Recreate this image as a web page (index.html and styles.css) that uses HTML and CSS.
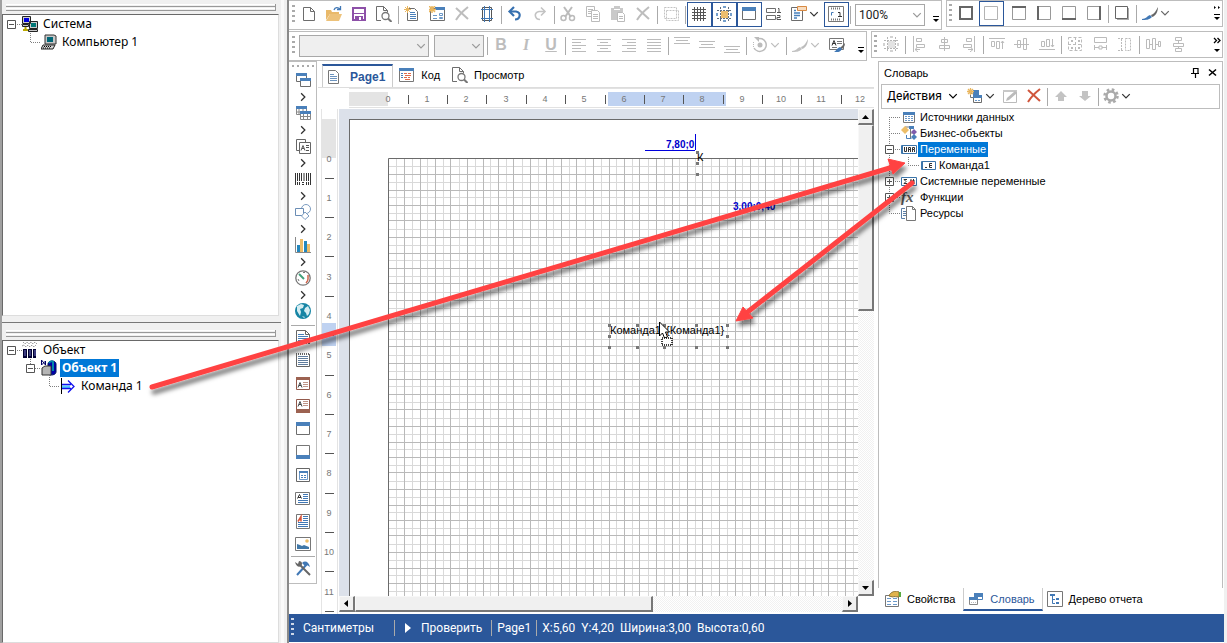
FILE: index.html
```
<!DOCTYPE html>
<html lang="ru">
<head>
<meta charset="utf-8">
<title>Редактор отчета</title>
<link rel="stylesheet" href="styles.css">
</head>
<body>
<svg class="sprite" aria-hidden="true">
  <symbol id="chev" viewBox="0 0 8 8"><path d="M1 2.500l3 3 3-3" fill="none" stroke="currentColor"/></symbol>
  <symbol id="more" viewBox="0 0 8 16"><path d="M1 9.500h6" stroke="#000" fill="none"/><path d="M1 12h6l-3 3z" fill="#000"/></symbol>
  <symbol id="more-dots" viewBox="0 0 8 16"><path d="M1 0v3l2-1.500zM5 0v3l2-1.500z" fill="#000"/><path d="M1 8.500h6" stroke="#000"/><path d="M1 11h6l-3 3z" fill="#000"/></symbol>
  <symbol id="more-arrows" viewBox="0 0 8 16"><path d="M1 1l2.500 2.500L1 6M4.500 1L7 3.500 4.500 6" fill="none" stroke="#000" stroke-width="1.300"/><path d="M1 12h6l-3 3z" fill="#000"/></symbol>
  <symbol id="new" viewBox="0 0 16 16"><path d="M2.500 1.500h7l4 4v9h-11zM9.500 1.500v4h4" fill="#fff" stroke="#6d6d6d"/></symbol>
  <symbol id="open" viewBox="0 0 16 16"><path d="M0 14V4h5l1 2h7v2H4z" fill="#e9b96a"/><path d="M4 8h12l-3 7H0z" fill="#edc27a"/><path d="M8 4c1-3 4-3 6-1M14.500 0v3.500H11" fill="none" stroke="#4178b5" stroke-width="1.300"/></symbol>
  <symbol id="save" viewBox="0 0 16 16"><path d="M2 2h12v12H2z" fill="#fff" stroke="#8d50a8" stroke-width="2"/><path d="M3 7.500h10" stroke="#8d50a8"/><path d="M4 10h8v5H4z" fill="#8d50a8"/><path d="M8 11h2v3H8z" fill="#fff"/></symbol>
  <symbol id="preview" viewBox="0 0 16 16"><path d="M5 14.500H.5v-14h7l4 4v2M7.500.500v4h4" fill="none" stroke="#6d6d6d"/><circle cx="9.500" cy="10" r="3.500" fill="#fff" stroke="#777" stroke-width="1.300"/><path d="M12 12.500l3.500 3.500" stroke="#777" stroke-width="2"/></symbol>
  <symbol id="newpage" viewBox="0 0 16 16"><path d="M3.500 2.500h7l3 3v9h-10z" fill="#fff" stroke="#6d6d6d"/><path d="M6 6.500h5M6 8.500h6M6 10.500h6M6 12.500h6" stroke="#4a80ba"/><path d="M3.500 0v7M0 3.500h7M1 1l5 5M6 1L1 6" stroke="#e9b65f"/></symbol>
  <symbol id="newform" viewBox="0 0 16 16"><path d="M1.500 2.500h14v12h-14z" fill="#fff" stroke="#6d6d6d"/><path d="M6 1h10v3H6z" fill="#4a80ba"/><path d="M4 9.500h4M4 12.500h4M10.500 7.500h3v2h-3zM10.500 11.500h3v1h-3z" stroke="#6b98c9" fill="none"/><path d="M3 0v7M0 3.500h7M0 0l6 6M6 0L0 6" stroke="#e9b65f" stroke-width="1.500"/></symbol>
  <symbol id="x" viewBox="0 0 16 16"><path d="M2 2l12 11M14 1C9 5 5 9 2 14" fill="none" stroke="currentColor" stroke-width="2"/></symbol>
  <symbol id="pagesetup" viewBox="0 0 16 16"><path d="M3.500 1.500h9v13h-9z" fill="none" stroke="#555"/><path d="M5.500 0v16M10.500 0v16M2 3.500h12M2 12.500h12" fill="none" stroke="#4178b5"/></symbol>
  <symbol id="undo" viewBox="0 0 16 16"><path d="M3 5.500h6c6 1 4 8-1 8" fill="none" stroke="#3670b0" stroke-width="2.200"/><path d="M7 1L2.500 5.500 7 10" fill="none" stroke="#3670b0" stroke-width="2.200"/></symbol>
  <symbol id="redo" viewBox="0 0 16 16"><path d="M13 5.500H7c-6 1-4 8 1 8" fill="none" stroke="#c3c3c3" stroke-width="1.600"/><path d="M9 1.500l4 4-4 4" fill="none" stroke="#c3c3c3" stroke-width="1.600"/></symbol>
  <symbol id="cut" viewBox="0 0 16 16"><path d="M4 1l7 10M12 1L5 11" stroke="#bbb" stroke-width="2"/><circle cx="3.500" cy="12" r="2.500" fill="none" stroke="#bbb" stroke-width="1.500"/><circle cx="12" cy="12" r="2.500" fill="none" stroke="#bbb" stroke-width="1.500"/></symbol>
  <symbol id="copy" viewBox="0 0 16 16"><path d="M1.500.500h8v10h-8z" fill="#fff" stroke="#bbb"/><path d="M6.500 4.500h6l2 2v9h-8z" fill="#fff" stroke="#bbb"/><path d="M3 3.500h5M3 5.500h3M3 7.500h3M8 8.500h5M8 10.500h5M8 12.500h5" stroke="#bbb"/></symbol>
  <symbol id="paste" viewBox="0 0 16 16"><path d="M1 2h3V0h6v2h3v5H7v7H1z" fill="#c9c9c9"/><path d="M4 3.500h6" stroke="#fff"/><path d="M7.500 6.500h5l2 2v7h-7z" fill="#fff" stroke="#bbb"/><path d="M9 10.500h4M9 12.500h4" stroke="#bbb"/></symbol>
  <symbol id="selectall" viewBox="0 0 16 16"><path d="M1.500 1.500h12v11h-12zM3.500 4.500h12v10h-12z" fill="none" stroke="#c3c3c3" stroke-dasharray="2 1"/></symbol>
  <symbol id="gridic" viewBox="0 0 16 16"><path d="M3.500 1v14M6.500 1v14M9.500 1v14M12.500 1v14M1 3.500h14M1 6.500h14M1 9.500h14M1 12.500h14" stroke="#555"/></symbol>
  <symbol id="snap" viewBox="0 0 16 16"><path d="M5 5h7v7H5z" fill="#edbe6e"/><path d="M1 4.500h14M1 12.500h14M4.500 1v14M12.500 1v14" stroke="#5f6d7d" stroke-dasharray="2 1"/><path d="M7 1h3M7 15h3M1 7v3M15 7v3" stroke="#4a80ba" stroke-width="1.500"/></symbol>
  <symbol id="snapg" viewBox="0 0 16 16"><path d="M5 5h7v7H5z" fill="#e3e3e3"/><path d="M1 4.500h14M1 12.500h14M4.500 1v14M12.500 1v14" stroke="#b5b5b5" stroke-dasharray="2 1"/><path d="M7 1h3M7 15h3M1 7v3M15 7v3" stroke="#c3c3c3" stroke-width="1.500"/></symbol>
  <symbol id="win" viewBox="0 0 16 16"><path d="M1.500 1.500h13v12h-13z" fill="#fff" stroke="#6d6d6d"/><path d="M1 1h14v4H1z" fill="#4a80ba"/></symbol>
  <symbol id="order" viewBox="0 0 16 16"><path d="M.5 2.500h9v4h-9zM.5 9.500h9v4h-9z" fill="#fff" stroke="#6d6d6d"/><path d="M12 2.500h1v4M11 6.500h4M11 9.500h3v2h-3v2h4" fill="none" stroke="#555"/></symbol>
  <symbol id="script" viewBox="0 0 16 16"><path d="M.5 1.500h11v13H.5z" fill="#fff" stroke="#6d6d6d"/><path d="M3 4.500h2M3 7h6M3 9.500h6M3 12h3" stroke="#4a80ba" stroke-width="1.300"/><path d="M6.500.500h9v4h-9z" fill="#f8ddc0" stroke="#d88a43"/></symbol>
  <symbol id="rulerd" viewBox="0 0 16 16"><path d="M.5.500h15v15H.5z" fill="#fff" stroke="#777"/><path d="M3 2.500h10M3 13.500h10" stroke="#777" stroke-width="2" stroke-dasharray="1 1"/><path d="M3.500 9.500v-3h2" fill="none" stroke="#4178b5"/><path d="M10 6.500h2v4M10 10.500h4" fill="none" stroke="#333"/></symbol>
  <symbol id="al" viewBox="0 0 16 16"><path d="M1 2.500h14M1 5.500h9M1 8.500h14M1 11.500h9M1 14.500h14" stroke="#bbb"/></symbol>
  <symbol id="ac" viewBox="0 0 16 16"><path d="M1 2.500h14M4 5.500h8M1 8.500h14M4 11.500h8M1 14.500h14" stroke="#bbb"/></symbol>
  <symbol id="ar" viewBox="0 0 16 16"><path d="M1 2.500h14M6 5.500h9M1 8.500h14M6 11.500h9M1 14.500h14" stroke="#bbb"/></symbol>
  <symbol id="aj" viewBox="0 0 16 16"><path d="M1 2.500h14M1 5.500h14M1 8.500h14M1 11.500h14M1 14.500h14" stroke="#bbb"/></symbol>
  <symbol id="vt" viewBox="0 0 16 16"><path d="M0 .5h16M2 3.500h12M0 6.500h16" stroke="#bbb"/></symbol>
  <symbol id="vm" viewBox="0 0 16 16"><path d="M0 4.500h16M2 7.500h12M0 10.500h16" stroke="#bbb"/></symbol>
  <symbol id="vb" viewBox="0 0 16 16"><path d="M0 9.500h16M2 12.500h12M0 15.500h16" stroke="#bbb"/></symbol>
  <symbol id="rot" viewBox="0 0 16 16"><path d="M5 2a6.500 6.500 0 1 1-3 9" fill="none" stroke="#bbb" stroke-width="1.500"/><path d="M2 0h5v5z" fill="#bbb"/><circle cx="8" cy="8" r="2.500" fill="#bbb"/><path d="M1.500 5v5" stroke="#bbb" stroke-dasharray="1 1"/></symbol>
  <symbol id="brush" viewBox="0 0 16 16"><path d="M16 2c0 4-2 9-6 10l-1-2c3-1 5-4 7-8z" fill="currentColor"/><path d="M8 10l2 2c-3 3-6 3-10 3v-1c4 0 5-3 8-4z" fill="var(--tip)"/></symbol>
  <symbol id="style" viewBox="0 0 16 16"><path d="M.5 1.500h14v11H.5z" fill="#fff" stroke="#777"/><path d="M3 8.500L5 3.500l2 5M3.500 6.500h3" fill="none" stroke="#333"/><path d="M8 4.500h5M8 6.500h5M3 10.500h5" stroke="#777"/><path d="M16 6c0 3-2 6-4 6l-1-1z" fill="#666"/><path d="M11 10l2 2c-2 4-5 3-8 3 2-1 3-4 6-5z" fill="#4178b5"/></symbol>
  <symbol id="ball" viewBox="0 0 16 16"><path d="M2 2h12v12H2z" fill="#fff" stroke="#666" stroke-width="2"/></symbol>
  <symbol id="bnone" viewBox="0 0 16 16"><path d="M1.500 1.500h13v13h-13z" fill="#fff" stroke="#b3b3b3"/></symbol>
  <symbol id="btop" viewBox="0 0 16 16"><path d="M1.500 1.500h13v13h-13z" fill="#fff" stroke="#999"/><path d="M1 2h14" stroke="#666" stroke-width="2"/></symbol>
  <symbol id="bleft" viewBox="0 0 16 16"><path d="M1.500 1.500h13v13h-13z" fill="#fff" stroke="#999"/><path d="M2 1v14" stroke="#666" stroke-width="2"/></symbol>
  <symbol id="bbot" viewBox="0 0 16 16"><path d="M1.500 1.500h13v13h-13z" fill="#fff" stroke="#999"/><path d="M1 14h14" stroke="#666" stroke-width="2"/></symbol>
  <symbol id="bright" viewBox="0 0 16 16"><path d="M1.500 1.500h13v13h-13z" fill="#fff" stroke="#999"/><path d="M14 1v14" stroke="#666" stroke-width="2"/></symbol>
  <symbol id="bshadow" viewBox="0 0 16 16"><path d="M3 3h12v12H3z" fill="#aaa"/><path d="M1.500 1.500h12v12h-12z" fill="#fff" stroke="#666"/></symbol>
  <symbol id="oleft" viewBox="0 0 16 16"><path d="M2.500 0v16M5.500 2.500h5v3h-5zM5.500 8.500h8v3h-8zM4 13.500h5M7 11l-3 2.500L7 16" fill="none" stroke="#bbb"/></symbol>
  <symbol id="ocen" viewBox="0 0 16 16"><path d="M8.500 1v14M5.500 3.500h6v3h-6zM3.500 9.500h10v3h-10z" fill="#fff" stroke="#bbb"/></symbol>
  <symbol id="oright" viewBox="0 0 16 16"><path d="M13.500 0v16M5.500 2.500h5v3h-5zM2.500 8.500h8v3h-8zM7 13.500h5M9 11l3 2.500L9 16" fill="none" stroke="#bbb"/></symbol>
  <symbol id="otop" viewBox="0 0 16 16"><path d="M0 2.500h16M2.500 5.500h3v5h-3zM7.500 5.500h3v7h-3zM13.500 5v8M12 7l1.500-2L15 7" fill="none" stroke="#bbb"/></symbol>
  <symbol id="omid" viewBox="0 0 16 16"><path d="M0 8.500h15M3.500 4.500h3v7h-3zM9.500 2.500h3v11h-3z" fill="#fff" stroke="#bbb"/></symbol>
  <symbol id="obot" viewBox="0 0 16 16"><path d="M0 13.500h16M2.500 5.500h3v5h-3zM7.500 3.500h3v7h-3zM13.500 3v8M12 9l1.500 2L15 9" fill="none" stroke="#bbb"/></symbol>
  <symbol id="osize" viewBox="0 0 16 16"><path d="M1.500 1.500h13v13h-13zM1 8.500h14M8.500 1v14" fill="none" stroke="#bbb" stroke-dasharray="3 2"/><path d="M4 4h2v2H4zM11 4h2v2h-2zM4 11h2v2H4zM11 11h2v2h-2z" fill="#bbb"/></symbol>
  <symbol id="owid" viewBox="0 0 16 16"><path d="M2.500 1.500h12v5h-12zM2.500 9v5M14.500 9v5M3 11.500h11" fill="none" stroke="#bbb"/><path d="M7 10h3v3H7z" fill="#fff" stroke="#bbb"/></symbol>
  <symbol id="ohei" viewBox="0 0 16 16"><path d="M8.500 2.500h5v12h-5zM1 2.500h6M1 14.500h6M4.500 3v11" fill="none" stroke="#bbb" stroke-dasharray="2 1"/></symbol>
  <symbol id="ohsp" viewBox="0 0 16 16"><path d="M1.500 3.500h3v9h-3zM7.500 2.500h3v11h-3zM13.500 5.500h2v5h-2zM5 8.500h2M11 8.500h2" fill="none" stroke="#bbb"/></symbol>
  <symbol id="ovsp" viewBox="0 0 16 16"><path d="M5.500 1.500h6v3h-6zM3.500 7.500h10v3h-10zM5.500 12.500h6v3h-6zM8.500 4v3M8.500 10v2" fill="none" stroke="#bbb"/></symbol>
  <symbol id="page" viewBox="0 0 16 16"><path d="M1.500 1.500h7l3 3v10h-10z" fill="#fff" stroke="#777"/><path d="M3 5.500h4M3 7.500h7M3 9.500h7M3 11.500h7" stroke="#6d94bf"/></symbol>
  <symbol id="code" viewBox="0 0 16 16"><path d="M.5 1.500h14v13H.5z" fill="#fff" stroke="#777"/><path d="M0 1h15v3H0z" fill="#4a80ba"/><path d="M2 6.500h2M2 8.500h2M2 10.500h2" stroke="#4a80ba"/><path d="M5 6.500h3M9 6.500h3M6 8.500h6M5 10.500h3M9 10.500h2M6 12.500h5" stroke="#e06a4a"/></symbol>
  <symbol id="bands" viewBox="0 0 16 16"><path d="M1.500 1.500h10v8h-10z" fill="#fff" stroke="#6d6d6d"/><path d="M1 1h11v3H1z" fill="#4a80ba"/><path d="M5.500 6.500h10v8h-10z" fill="#fff" stroke="#6d6d6d"/><path d="M5 6h11v3H5z" fill="#4a80ba"/></symbol>
  <symbol id="cross" viewBox="0 0 16 16"><path d="M1.500 1.500h10v8h-10zM4 4v6M8 4v6M1 7h10" fill="#fff" stroke="#888"/><path d="M1 1h11v3H1z" fill="#4a80ba"/><path d="M5.500 6.500h10v8h-10zM8.500 7v7M12.500 7v7M5 11.500h10" fill="#fff" stroke="#888"/><path d="M5 6h11v3H5z" fill="#4a80ba"/></symbol>
  <symbol id="comps" viewBox="0 0 16 16"><path d="M1.500 1.500h9v11h-9z" fill="#fff" stroke="#666"/><path d="M4.500 4.500h11v11h-11z" fill="#fff" stroke="#666"/><path d="M6 12.500l2-5 2 5M7 10.500h2M11 7.500h3M11 9.500h3M11 12.500h3" fill="none" stroke="#555"/></symbol>
  <symbol id="bar" viewBox="0 0 16 16"><path d="M.5 2v12M2.500 2v8M4.500 2v8M6.500 2v8M9 2v8M11.500 2v8M13.500 2v8M15.500 2v12" stroke="#333"/><path d="M2.500 11v3M4.500 11v3M7 11.500h2M7 13.500h2M11.500 11v3M13.500 11v3" fill="none" stroke="#333"/></symbol>
  <symbol id="shapes" viewBox="0 0 16 16"><circle cx="11" cy="5" r="4.500" fill="#fff" stroke="#7c9cc0"/><path d="M.5 4.500h8v7h-8z" fill="#fff" stroke="#6a8db5"/><path d="M10 8l4 4-4 3.500L6.500 12z" fill="#fff" stroke="#7c9cc0"/></symbol>
  <symbol id="chart" viewBox="0 0 16 16"><path d="M.5 0v15.500H16" fill="none" stroke="#888"/><path d="M2 8h3v7H2zM9 4h3v11H9z" fill="#2387bd"/><path d="M5 2h3v13H5zM12 7h3v8h-3z" fill="#ecbd68"/></symbol>
  <symbol id="gauge" viewBox="0 0 16 16"><circle cx="8" cy="8" r="7.200" fill="#fff" stroke="#777" stroke-width="1.300"/><path d="M13 5v4c0 2-1 3-2 4" fill="none" stroke="#d0644b" stroke-width="1.500"/><path d="M4 4l5 5" stroke="#41a07b" stroke-width="2"/><path d="M3 9l1 2M8 2.500h2" stroke="#777"/></symbol>
  <symbol id="globe" viewBox="0 0 16 16"><circle cx="8" cy="8" r="8" fill="#1685a5"/><path d="M2 3l4-2 3 1-1 3-3 1 1 3-1 4-3-5zM10 5l3-2 2 4-1 4-2 2-1-3-2-2zM7 13l3 1-1 1z" fill="#d5edf2"/></symbol>
  <symbol id="sub" viewBox="0 0 16 16"><path d="M1.500 15V1.500h9l4 4V15" fill="#fff" stroke="#666"/><path d="M10.500 1.500v4h4" fill="none" stroke="#666"/><path d="M3 5.500h6M3 7.500h10M3 9.500h10M3 11.500h10" stroke="#4a80ba"/><path d="M1 14.500h14" stroke="#555" stroke-dasharray="1 1"/></symbol>
  <symbol id="memo" viewBox="0 0 16 16"><path d="M1.500 2v12.500h13V2" fill="#fff" stroke="#666"/><path d="M1 2h14" stroke="#666" stroke-width="2" stroke-dasharray="1 1"/><path d="M3 4.500h10M3 6.500h10M3 8.500h10M3 10.500h10M3 12.500h10" stroke="#607d9d"/></symbol>
  <symbol id="headb" viewBox="0 0 16 16"><path d="M1.500 2.500h13v12h-13z" fill="#fff" stroke="#93594b"/><path d="M1 2h14v3H1z" fill="#9c6251"/><path d="M3 12.500L5 7.500l2 5M4 10.500h2" fill="none" stroke="#444"/><path d="M8 7.500h5M8 9.500h5M8 11.500h5" stroke="#c09588"/></symbol>
  <symbol id="footb" viewBox="0 0 16 16"><path d="M1.500 1.500h13v12h-13z" fill="#fff" stroke="#93594b"/><path d="M1 11h14v4H1z" fill="#9c6251"/><path d="M3 8.500L5 3.500l2 5M4 6.500h2" fill="none" stroke="#444"/><path d="M8 3.500h5M8 5.500h5M8 7.500h5" stroke="#c09588"/></symbol>
  <symbol id="foot" viewBox="0 0 16 16"><path d="M1.500 1.500h13v13h-13z" fill="#fff" stroke="#777"/><path d="M1 11h14v4H1z" fill="#4a80ba"/></symbol>
  <symbol id="panel" viewBox="0 0 16 16"><path d="M1.500 1.500h13v13h-13z" fill="#fff" stroke="#666"/><path d="M4.500 5.500h8v7h-8z" fill="#fff" stroke="#6b98c9"/><path d="M4 4h9v2H4z" fill="#4a80ba"/><path d="M6 8.500h2M9 8.500h2M6 10.500h2M9 10.500h2" stroke="#4a80ba"/></symbol>
  <symbol id="text" viewBox="0 0 16 16"><path d="M.5 2.500h14v12H.5z" fill="#fff" stroke="#777"/><path d="M2.500 8.500l2-4 2 4M3 7.500h3" fill="none" stroke="#333"/><path d="M8 4.500h5M8 6.500h5M8 8.500h5M3 10.500h10M3 12.500h10" stroke="#4178b5"/></symbol>
  <symbol id="rich" viewBox="0 0 16 16"><path d="M1.500 1.500h13v14h-13z" fill="#fff" stroke="#777"/><path d="M3 8.500l3-5v5M4 6.500h2" fill="none" stroke="#d6543a" stroke-width="1.500"/><path d="M8 3.500h5M8 5.500h5M8 7.500h5M3 9.500h10M3 11.500h10M3 13.500h10" stroke="#4178b5"/></symbol>
  <symbol id="image" viewBox="0 0 16 16"><path d="M.5 1.500h15v13H.5z" fill="#fff" stroke="#777"/><path d="M2 8l3 1 2 1 2-1 5 2v2H2z" fill="#4178a8"/><circle cx="12" cy="5" r="1.800" fill="#ecbd68"/></symbol>
  <symbol id="tools" viewBox="0 0 16 16"><path d="M2 15L12 4" stroke="#4178b5" stroke-width="2"/><path d="M7 3c3-3 7-1 8 4l-3-2-2 1z" fill="#4178b5"/><path d="M4 4l11 11" stroke="#666" stroke-width="2"/><path d="M0 2l3 2 1-3c3 0 4 3 2 5S1 6 0 2z" fill="#666"/></symbol>
  <symbol id="newdict" viewBox="0 0 16 16"><path d="M3.500 5.500h6v4h-6z" fill="#fff" stroke="#777"/><path d="M6 2h6v5H6z" fill="#4a80ba"/><path d="M6.500 8.500h8v6h-8z" fill="#fff" stroke="#6d6d6d"/><path d="M6 7h9v3H6z" fill="#4a80ba"/><path d="M8 12.500h2M11 12.500h2" stroke="#6b98c9"/><path d="M3.500 0v7M0 3.500h7M1 1l5 5M6 1L1 6" stroke="#e9b65f" stroke-width="1.300"/></symbol>
  <symbol id="edit" viewBox="0 0 16 16"><path d="M1.500 2.500h13v12h-13z" fill="none" stroke="#bbb"/><path d="M1 2h14v2H1z" fill="#c8c8c8"/><path d="M4 13l1-3 8-7 2 2-8 7z" fill="#bbb"/></symbol>
  <symbol id="up" viewBox="0 0 16 16"><path d="M8 3l6 6h-3v4H5V9H2z" fill="#c3c3c3"/></symbol>
  <symbol id="down" viewBox="0 0 16 16"><path d="M8 13L2 8h3V3h6v5h3z" fill="#c3c3c3"/></symbol>
  <symbol id="gear" viewBox="0 0 16 16"><circle cx="8" cy="8" r="4.500" fill="none" stroke="#aaa" stroke-width="2.500"/><circle cx="8" cy="8" r="6.500" fill="none" stroke="#aaa" stroke-width="2.500" stroke-dasharray="2.600 2.500"/></symbol>
  <symbol id="ds" viewBox="0 0 16 16"><path d="M2.500 3.500h11v10h-11z" fill="#fff" stroke="#777"/><path d="M2 3h12v3H2z" fill="#4a80ba"/><path d="M4 7.500h8M4 9.500h8M4 11.500h8" stroke="#6b98c9" stroke-dasharray="2 1"/></symbol>
  <symbol id="bo" viewBox="0 0 16 16"><path d="M4 2h9M9.500 3v5h4M9.500 8v5" fill="none" stroke="#777"/><path d="M8 1h5v3H8z" fill="#4a80ba"/><path d="M4 1l4 4-4 4-4-4z" fill="#ecbd68"/><path d="M13 4l3 3-3 3-3-3z" fill="#7e5cad"/><path d="M13 9l3 3-3 3-3-3z" fill="#4a80ba"/><path d="M5.500 10v3.500h5" fill="none" stroke="#4a80ba"/></symbol>
  <symbol id="var" viewBox="0 0 16 16"><path d="M.5 4.500h15v8H.5z" fill="#fff" stroke="#3b74a9"/><path d="M1.500 4v8" stroke="#3b74a9"/><path d="M3.500 6v4.500h2V6M7.500 11V6.500h2V11M7 8.500h2M11.500 11V6.500h2v2h-2M13.500 9v2" fill="none" stroke="#333"/></symbol>
  <symbol id="vare" viewBox="0 0 16 16"><path d="M1.500 4.500h14v8h-14z" fill="#fff" stroke="#3b74a9"/><path d="M2.500 4v8" stroke="#3b74a9"/><path d="M5 10.500h2M12 6.500H9.500v4H12M10 8.500h2" fill="none" stroke="#333"/></symbol>
  <symbol id="sys" viewBox="0 0 16 16"><path d="M.5 4.500h15v8H.5z" fill="#fff" stroke="#3b74a9"/><path d="M6 6.500H3l2 2-2 2h3M9 8h5M9 10h5M10 6v5M12.500 6v5" fill="none" stroke="#333"/></symbol>
  <symbol id="res" viewBox="0 0 16 16"><path d="M4 13.500H.5v-10H4M2 6.500h3M2 8.500h3M2 10.500h3" fill="none" stroke="#5c7fa6"/><path d="M5.500 1.500h6l3 3v11h-9zM11.500 1.500v3h3" fill="#fff" stroke="#777"/></symbol>
  <symbol id="props" viewBox="0 0 16 16"><path d="M.5 4.500h13v11H.5z" fill="#fff" stroke="#777"/><path d="M2 7.500h4M8 7.500h4M2 10.500h4M8 10.500h4M2 13.500h4M8 13.500h4" stroke="#6b98c9"/><path d="M4 5c1-4 7-6 10-4v5c-3 0-5-1-6 0z" fill="#e0b34d" stroke="#8b7336"/><path d="M14 1h2v5h-2z" fill="#58a941"/></symbol>
  <symbol id="dict" viewBox="0 0 16 16"><path d="M6.500 2.500h8v6h-8z" fill="#fff" stroke="#4a80ba"/><path d="M6 2h9v4H6z" fill="#4a80ba"/><path d="M1.500 6.500h8v7h-8z" fill="#fff" stroke="#888"/><path d="M1 6h9v3H1z" fill="#4a80ba"/><path d="M3 11.500h5" stroke="#bbb" stroke-dasharray="1 1"/></symbol>
  <symbol id="rtree" viewBox="0 0 16 16"><path d="M.5.500h15v15H.5z" fill="#fff" stroke="#777"/><path d="M3 4h5M9 8h3M9 12h3" stroke="#4178b5" stroke-width="2"/><path d="M5.500 5v7.500H8M6 8.500h2" fill="none" stroke="#4178b5"/></symbol>
  <symbol id="pc" viewBox="0 0 16 16"><path d="M4 1h9l2 1v8H4z" fill="#c8c8c8" stroke="#333"/><path d="M6 3h6v5H6z" fill="#067"/><path d="M2 11h12l-2 4H0z" fill="#d5d5d5" stroke="#222"/><path d="M3 12.500h8M2 14h8" stroke="#000" stroke-dasharray="1 1"/></symbol>
  <symbol id="net" viewBox="0 0 16 16"><path d="M.5.500h8v7h-8zM7.500 5.500h8v7h-8z" fill="#ccc" stroke="#222"/><path d="M2 2h5v4H2z" fill="#00d"/><path d="M9 7h5v4H9z" fill="#077"/><path d="M.5 8.500h6v2h-6zM6.500 13.500h9v2h-9z" fill="#c8c8c8" stroke="#222"/><path d="M3.500 11v4M1 14h5" stroke="#bba900" stroke-width="2"/></symbol>
  <symbol id="plant" viewBox="0 0 16 16"><path d="M1 0l2 2 2-2 2 2 2-2 2 2 2-2 2 2M0 4l2-1 2 2 2-2 2 2 2-2 2 2 2-2" fill="none" stroke="#999" stroke-dasharray="2 1"/><path d="M1 7h4v9H1zM6 7h4v9H6zM11 7h3v9h-3z" fill="#003"/><path d="M3 8v6M8 8v6M13 8v6" stroke="#77c"/></symbol>
  <symbol id="obj" viewBox="0 0 16 16"><path d="M.5 0v5l4-4v4z" fill="none" stroke="#006"/><path d="M7 4c0-4 8-4 8 0v8c0 3-6 4-8 2z" fill="#00a" stroke="#001060"/><path d="M8 3c1-2 4-2 4-1v9" fill="none" stroke="#08a" stroke-width="2"/><path d="M1 8l3-2h6v9H1z" fill="#b5b5b5" stroke="#333"/></symbol>
  <symbol id="cmd" viewBox="0 0 16 16"><path d="M2 7.500h8v3H2z" fill="#5cf"/><path d="M2 6.500h9M2 10.500h9M8 2.500l6 6-6 6" fill="none" stroke="#11e" stroke-width="1.300"/><path d="M1.500 0v16" stroke="#000"/></symbol>
</svg>

<div class="app">
  <aside class="side">
    <section class="dock dock-top">
      <div class="dock-grip"></div>
      <ul class="tree">
        <li><svg class="gut" width="19" height="18"><path class="dot" d="M14 9.500h5"/><path class="box" d="M4.500 5.500h8v8h-8zM6 9.500h5"/></svg><svg class="i"><use href="#net"/></svg><span>Система</span></li>
        <li><svg class="gut" width="38" height="18"><path class="dot" d="M27.500 0v9.500h11"/></svg><svg class="i"><use href="#pc"/></svg><span>Компьютер 1</span></li>
      </ul>
    </section>
    <section class="dock dock-bottom">
      <div class="dock-grip"></div>
      <ul class="tree">
        <li><svg class="gut" width="19" height="18"><path class="dot" d="M14 9.500h5"/><path class="box" d="M4.500 5.500h8v8h-8zM6 9.500h5"/></svg><svg class="i"><use href="#plant"/></svg><span>Объект</span></li>
        <li><svg class="gut" width="38" height="18"><path class="dot" d="M27.500 0v5M32 9.500h6"/><path class="box" d="M23.500 5.500h8v8h-8zM25 9.500h5"/></svg><svg class="i"><use href="#obj"/></svg><span class="picked">Объект 1</span></li>
        <li><svg class="gut" width="57" height="18"><path class="dot" d="M46.500 0v9.500h11"/></svg><svg class="i"><use href="#cmd"/></svg><span>Команда 1</span></li>
      </ul>
    </section>
  </aside>

  <main class="designer">
    <div class="bars">
      <div class="bar grow">
        <i class="grip"></i>
        <button aria-label="Новый"><svg class="i"><use href="#new"/></svg></button><button aria-label="Открыть"><svg class="i"><use href="#open"/></svg></button><button aria-label="Сохранить"><svg class="i"><use href="#save"/></svg></button><button aria-label="Просмотр"><svg class="i"><use href="#preview"/></svg></button>
        <i class="sep"></i>
        <button aria-label="Новая страница"><svg class="i"><use href="#newpage"/></svg></button><button aria-label="Новая форма"><svg class="i"><use href="#newform"/></svg></button><button class="off" aria-label="Удалить страницу"><svg class="i"><use href="#x"/></svg></button><button aria-label="Параметры страницы"><svg class="i"><use href="#pagesetup"/></svg></button>
        <i class="sep"></i>
        <button aria-label="Отменить"><svg class="i"><use href="#undo"/></svg></button><button aria-label="Вернуть"><svg class="i"><use href="#redo"/></svg></button>
        <i class="sep"></i>
        <button aria-label="Вырезать"><svg class="i"><use href="#cut"/></svg></button><button aria-label="Копировать"><svg class="i"><use href="#copy"/></svg></button><button aria-label="Вставить"><svg class="i"><use href="#paste"/></svg></button><button class="off" aria-label="Удалить"><svg class="i"><use href="#x"/></svg></button>
        <i class="sep"></i>
        <button aria-label="Выделить все"><svg class="i"><use href="#selectall"/></svg></button>
        <i class="sep"></i>
        <button class="on" aria-label="Сетка"><svg class="i"><use href="#gridic"/></svg></button><button class="on" aria-label="Привязка"><svg class="i"><use href="#snap"/></svg></button><button class="on" aria-label="Заголовки"><svg class="i"><use href="#win"/></svg></button><button aria-label="Порядок"><svg class="i"><use href="#order"/></svg></button><button class="drop" aria-label="Быстрая информация"><svg class="i"><use href="#script"/></svg><svg class="chev"><use href="#chev"/></svg></button><button class="on" aria-label="Линейки"><svg class="i"><use href="#rulerd"/></svg></button>
        <i class="sep"></i>
        <span class="combo zoom"><select aria-label="Масштаб"><option>100%</option></select><svg class="chev"><use href="#chev"/></svg></span>
        <button class="more" aria-label="Еще"><svg><use href="#more"/></svg></button>
      </div>
      <div class="bar short side-a">
        <i class="grip"></i>
        <button aria-label="Все границы"><svg class="i"><use href="#ball"/></svg></button><button class="on" aria-label="Нет границ"><svg class="i"><use href="#bnone"/></svg></button>
        <i class="sep clear"></i>
        <button aria-label="Верхняя"><svg class="i"><use href="#btop"/></svg></button><button aria-label="Левая"><svg class="i"><use href="#bleft"/></svg></button><button aria-label="Нижняя"><svg class="i"><use href="#bbot"/></svg></button><button aria-label="Правая"><svg class="i"><use href="#bright"/></svg></button>
        <i class="sep"></i>
        <button aria-label="Тень"><svg class="i"><use href="#bshadow"/></svg></button>
        <i class="sep"></i>
        <button class="drop ink" aria-label="Цвет границы"><svg class="i"><use href="#brush"/></svg><svg class="chev"><use href="#chev"/></svg></button>
        <button class="more" aria-label="Еще"><svg><use href="#more-dots"/></svg></button>
      </div>
    </div>
    <div class="bars second">
      <div class="bar grow">
        <i class="grip"></i>
        <span class="combo font"><select aria-label="Шрифт" disabled><option></option></select><svg class="chev"><use href="#chev"/></svg></span>
        <span class="combo size"><select aria-label="Размер" disabled><option></option></select><svg class="chev"><use href="#chev"/></svg></span>
        <i class="sep"></i>
        <button class="off"><b>B</b></button><button class="off"><em>I</em></button><button class="off"><u>U</u></button>
        <i class="sep"></i>
        <button aria-label="По левому краю"><svg class="i"><use href="#al"/></svg></button><button aria-label="По центру"><svg class="i"><use href="#ac"/></svg></button><button aria-label="По правому краю"><svg class="i"><use href="#ar"/></svg></button><button aria-label="По ширине"><svg class="i"><use href="#aj"/></svg></button>
        <i class="sep"></i>
        <button aria-label="Сверху"><svg class="i"><use href="#vt"/></svg></button><button aria-label="Посередине"><svg class="i"><use href="#vm"/></svg></button><button aria-label="Снизу"><svg class="i"><use href="#vb"/></svg></button>
        <i class="sep"></i>
        <button class="drop off" aria-label="Поворот"><svg class="i"><use href="#rot"/></svg><svg class="chev"><use href="#chev"/></svg></button>
        <i class="sep"></i>
        <button class="drop off" aria-label="Цвет текста"><svg class="i"><use href="#brush"/></svg><svg class="chev"><use href="#chev"/></svg></button>
        <button class="styles" aria-label="Стили"><svg class="i"><use href="#style"/></svg></button>
        <button class="more" aria-label="Еще"><svg><use href="#more"/></svg></button>
      </div>
      <div class="bar short side-b">
        <i class="grip"></i>
        <button aria-label="По сетке"><svg class="i"><use href="#snapg"/></svg></button>
        <i class="sep"></i>
        <button aria-label="Левые края"><svg class="i"><use href="#oleft"/></svg></button><button aria-label="Центры"><svg class="i"><use href="#ocen"/></svg></button><button aria-label="Правые края"><svg class="i"><use href="#oright"/></svg></button>
        <i class="sep"></i>
        <button aria-label="Верхние края"><svg class="i"><use href="#otop"/></svg></button><button aria-label="Середины"><svg class="i"><use href="#omid"/></svg></button><button aria-label="Нижние края"><svg class="i"><use href="#obot"/></svg></button>
        <i class="sep"></i>
        <button aria-label="Одинаковый размер"><svg class="i"><use href="#osize"/></svg></button><button aria-label="Одинаковая ширина"><svg class="i"><use href="#owid"/></svg></button><button aria-label="Одинаковая высота"><svg class="i"><use href="#ohei"/></svg></button>
        <i class="sep"></i>
        <button aria-label="Интервал по горизонтали"><svg class="i"><use href="#ohsp"/></svg></button><button aria-label="Интервал по вертикали"><svg class="i"><use href="#ovsp"/></svg></button>
        <button class="more" aria-label="Еще"><svg><use href="#more-arrows"/></svg></button>
      </div>
    </div>

    <div class="work">
      <nav class="palette">
        <i class="hgrip"></i>
        <button aria-label="Бэнды"><svg class="i"><use href="#bands"/></svg><svg class="chev"><use href="#chev"/></svg></button>
        <button aria-label="Кросс-бэнды"><svg class="i"><use href="#cross"/></svg><svg class="chev"><use href="#chev"/></svg></button>
        <button aria-label="Компоненты"><svg class="i"><use href="#comps"/></svg><svg class="chev"><use href="#chev"/></svg></button>
        <button aria-label="Штрихкоды"><svg class="i"><use href="#bar"/></svg><svg class="chev"><use href="#chev"/></svg></button>
        <button aria-label="Фигуры"><svg class="i"><use href="#shapes"/></svg><svg class="chev"><use href="#chev"/></svg></button>
        <button aria-label="Диаграммы"><svg class="i"><use href="#chart"/></svg><svg class="chev"><use href="#chev"/></svg></button>
        <button aria-label="Индикаторы"><svg class="i"><use href="#gauge"/></svg><svg class="chev"><use href="#chev"/></svg></button>
        <button class="last" aria-label="Карты"><svg class="i"><use href="#globe"/></svg></button>
        <i class="rule"></i>
        <button class="one" aria-label="Заголовок отчета"><svg class="i"><use href="#sub"/></svg></button>
        <button class="one" aria-label="Итог отчета"><svg class="i"><use href="#memo"/></svg></button>
        <button class="one" aria-label="Заголовок страницы"><svg class="i"><use href="#headb"/></svg></button>
        <button class="one" aria-label="Итог страницы"><svg class="i"><use href="#footb"/></svg></button>
        <button class="one" aria-label="Заголовок"><svg class="i"><use href="#win"/></svg></button>
        <button class="one" aria-label="Итог"><svg class="i"><use href="#foot"/></svg></button>
        <button class="one" aria-label="Данные"><svg class="i"><use href="#panel"/></svg></button>
        <button class="one" aria-label="Текст"><svg class="i"><use href="#text"/></svg></button>
        <button class="one" aria-label="RTF-текст"><svg class="i"><use href="#rich"/></svg></button>
        <button class="one" aria-label="Изображение"><svg class="i"><use href="#image"/></svg></button>
        <i class="rule"></i>
        <button class="one" aria-label="Настройка"><svg class="i"><use href="#tools"/></svg></button>
      </nav>

      <section class="center">
        <div class="tabs">
          <button class="tab active"><svg class="i"><use href="#page"/></svg>Page1</button>
          <button class="tab"><svg class="i"><use href="#code"/></svg>Код</button>
          <button class="tab"><svg class="i"><use href="#preview"/></svg>Просмотр</button>
        </div>
        <div class="sheet">
          <svg class="hruler">
            <rect x="31" y="4" width="1000" height="14" fill="#fff"/><rect x="31" y="4" width="39" height="14" fill="#e4e4e4"/><rect x="290" y="4" width="118" height="14" fill="#bfd2f1"/>
            <path d="M31 .5h1000" stroke="#e2e2e2"/><path d="M31 19.500h1000" stroke="#e2e2e2"/>
            <path class="tick" d="M90.500 7v9M129.500 7v9M168.500 7v9M208.500 7v9M247.500 7v9M287.500 7v9M326.500 7v9M365.500 7v9M405.500 7v9M444.500 7v9M483.500 7v9M523.500 7v9"/>
            <g class="num"><text x="70" y="14">0</text><text x="109" y="14">1</text><text x="148" y="14">2</text><text x="188" y="14">3</text><text x="227" y="14">4</text><text x="266" y="14">5</text><text x="306" y="14">6</text><text x="345" y="14">7</text><text x="384" y="14">8</text><text x="424" y="14">9</text><text x="463" y="14">10</text><text x="503" y="14">11</text><text x="542" y="14">12</text></g>
          </svg>
          <svg class="vruler">
            <path d="M3.500 0v1000M19.500 0v1000" stroke="#e4e4e4"/>
            <rect x="4" y="10" width="14" height="39" fill="#e4e4e4"/><rect x="4" y="214" width="14" height="23" fill="#bfd2f1"/>
            <path class="tick" d="M7 69.500h9M7 108.500h9M7 147.500h9M7 187.500h9M7 226.500h9M7 266.500h9M7 305.500h9M7 344.500h9M7 384.500h9M7 423.500h9M7 462.500h9M7 502.500h9"/>
            <g class="num"><text x="11" y="53">0</text><text x="11" y="92">1</text><text x="11" y="131">2</text><text x="11" y="171">3</text><text x="11" y="210">4</text><text x="11" y="249">5</text><text x="11" y="289">6</text><text x="11" y="328">7</text><text x="11" y="367">8</text><text x="11" y="407">9</text><text x="11" y="446">10</text><text x="11" y="486">11</text></g>
          </svg>
          <svg class="canvas">
            <defs><pattern id="cells" x="49" y="49" width="63" height="63" patternUnits="userSpaceOnUse">
              <path d="M8.500 0v63M24.500 0v63M39.500 0v63M55.500 0v63M0 8.500h63M0 24.500h63M0 39.500h63M0 55.500h63" stroke="#d9d9d9"/>
              <path d="M16.500 0v63M32.500 0v63M47.500 0v63M62.500 0v63M0 16.500h63M0 32.500h63M0 47.500h63M0 62.500h63" stroke="#b9b9b9"/>
            </pattern></defs>
            <rect x="10" y="10" width="2000" height="2000" fill="#fff" stroke="#6b6b6b" transform="translate(.5 .5)"/>
            <rect x="49" y="49" width="2000" height="2000" fill="url(#cells)"/>
            <path d="M2000 49.500H49.500V2000" fill="none" stroke="#6b6b6b"/>
            <path d="M306 41.500h50M356.500 25v16" stroke="#00d" fill="none"/>
            <text class="mark" x="327" y="39">7,80;0</text>
            <text class="mark" x="394" y="101">3,00;0,40</text>
            <text class="item" x="358" y="52">К</text>
            <path class="knob" d="M357 42h3v3h-3zM357 53h3v3h-3zM357 64h3v3h-3z"/>
            <text class="item" x="271" y="225">Команда1</text><text class="item" x="327" y="225">{Команда1}</text>
            <path class="knob" d="M269 215h3v3h-3zM297 215h3v3h-3zM324 215h3v3h-3zM356 215h3v3h-3zM387 215h3v3h-3zM269 226h3v3h-3zM387 226h3v3h-3zM269 237h3v3h-3zM297 237h3v3h-3zM324 237h3v3h-3zM356 237h3v3h-3zM387 237h3v3h-3z"/>
            <path d="M320.500 213v14l3-3 2 5 3-1-2-5h4z" fill="#fff" stroke="#000"/><rect x="323" y="229" width="10" height="7" fill="#fff" stroke="#000" stroke-width="1.500" stroke-dasharray="1 1"/>
          </svg>
          <div class="vbar"><button aria-label="Вверх"><svg width="9" height="9"><path d="M1 7h7L4.500 3z"/></svg></button><div class="thumb"></div><button class="end" aria-label="Вниз"><svg width="9" height="9"><path d="M1 3h7L4.500 7z"/></svg></button></div>
          <div class="hbar"><button aria-label="Влево"><svg width="9" height="9"><path d="M6 1v7L2 4.500z"/></svg></button><div class="thumb"></div><button class="end" aria-label="Вправо"><svg width="9" height="9"><path d="M3 1v7l4-3.500z"/></svg></button></div>
        </div>
      </section>

      <section class="dict">
        <div class="dict-box">
          <header><h2>Словарь</h2><svg width="30" height="12"><path d="M3.500 1v5M8 1v5M1 6.500h8M3 1.500h5M5.500 7v4" fill="none" stroke="#000" stroke-width="1.200"/><path d="M19 2.500l7 6M26 2.500l-7 6" stroke="#000" stroke-width="1.600"/></svg></header>
          <div class="dict-bar">
            <button class="actions">Действия<svg class="chev"><use href="#chev"/></svg></button>
            <button class="drop" aria-label="Новый элемент"><svg class="i"><use href="#newdict"/></svg><svg class="chev"><use href="#chev"/></svg></button>
            <button aria-label="Изменить"><svg class="i"><use href="#edit"/></svg></button><button class="kill" aria-label="Удалить"><svg class="i"><use href="#x"/></svg></button>
            <i class="sep"></i>
            <button aria-label="Выше"><svg class="i"><use href="#up"/></svg></button><button aria-label="Ниже"><svg class="i"><use href="#down"/></svg></button>
            <i class="sep"></i>
            <button class="drop" aria-label="Настройки"><svg class="i"><use href="#gear"/></svg><svg class="chev"><use href="#chev"/></svg></button>
          </div>
          <ul class="fields">
            <li><svg class="gut" width="20" height="16"><path class="dot" d="M8.500 8v8M8 8.500h12"/></svg><svg class="i"><use href="#ds"/></svg><span>Источники данных</span></li>
            <li><svg class="gut" width="20" height="16"><path class="dot" d="M8.500 0v16M8 8.500h12"/></svg><svg class="i"><use href="#bo"/></svg><span>Бизнес-объекты</span></li>
            <li><svg class="gut" width="20" height="16"><path class="dot" d="M8.500 0v16M14 8.500h6"/><path class="box" d="M4.500 4.500h8v8h-8zM6 8.500h5"/></svg><svg class="i"><use href="#var"/></svg><span class="picked">Переменные</span></li>
            <li><svg class="gut" width="39" height="16"><path class="dot" d="M8.500 0v16M27.500 0v8.500h12"/></svg><svg class="i"><use href="#vare"/></svg><span>Команда1</span></li>
            <li><svg class="gut" width="20" height="16"><path class="dot" d="M8.500 0v16M14 8.500h6"/><path class="box" d="M4.500 4.500h8v8h-8zM6 8.500h5M8.500 6v5"/></svg><svg class="i"><use href="#sys"/></svg><span>Системные переменные</span></li>
            <li><svg class="gut" width="20" height="16"><path class="dot" d="M8.500 0v16M14 8.500h6"/><path class="box" d="M4.500 4.500h8v8h-8zM6 8.500h5M8.500 6v5"/></svg><i class="fx">fx</i><span>Функции</span></li>
            <li><svg class="gut" width="20" height="16"><path class="dot" d="M8.500 0v8.500h12"/></svg><svg class="i"><use href="#res"/></svg><span>Ресурсы</span></li>
          </ul>
        </div>
        <div class="dict-tabs">
          <button><svg class="i"><use href="#props"/></svg>Свойства</button>
          <button class="active"><svg class="i"><use href="#dict"/></svg>Словарь</button>
          <button><svg class="i"><use href="#rtree"/></svg>Дерево отчета</button>
        </div>
      </section>
    </div>

    <footer class="status">
      <i class="grip"></i><span class="units">Сантиметры</span><i class="sep"></i>
      <button class="check"><svg width="8" height="12"><path d="M1 1v10l6-5z" fill="#fff"/></svg>Проверить</button><i class="sep"></i>
      <span class="pg">Page1</span><i class="sep"></i>
      <span class="pos"><span>X:5,60</span><span>Y:4,20</span><span>Ширина:3,00</span><span>Высота:0,60</span></span>
    </footer>
  </main>
</div>

<svg class="arrows" width="1227" height="643" aria-hidden="true">
  <defs><filter id="drop" x="-5%" y="-5%" width="110%" height="115%"><feDropShadow dx="2" dy="5" stdDeviation="2" flood-opacity=".5"/></filter></defs>
  <g filter="url(#drop)" fill="#ff4343" stroke="#ff4343">
    <path d="M152 387L893 167" stroke-width="5" stroke-linecap="round"/><path d="M905 163l-17-4 5 15z"/>
    <path d="M912 183L745 314" stroke-width="5" stroke-linecap="round"/><path d="M736 321l7-14 10 11z"/>
  </g>
</svg>
</body>
</html>
```
FILE: styles.css
```
* { box-sizing: border-box; }
html, body { height: 100%; }
body { margin: 0; overflow: hidden; background: #f0f0f0; color: #000; font: 12px/16px Roboto, "Noto Sans", sans-serif; }
button { display: flex; align-items: center; justify-content: center; margin: 0; padding: 0; border: 0; background: none; color: #333; font: inherit; }
ul { margin: 0; padding: 0; list-style: none; }
.sprite { position: absolute; width: 0; height: 0; }
.i { width: 16px; height: 16px; flex: none; }
.chev { width: 10px; height: 10px; flex: none; }
.dot { fill: none; stroke: #808080; stroke-dasharray: 1 1; }
.box { fill: #fff; stroke: #555; }
.gut { flex: none; }
.app { display: flex; height: 100vh; }

/* Left docks */
.side { display: flex; flex-direction: column; width: 281px; flex: none; border-left: 2px solid #a0a0a0; box-shadow: 3px 0 #fafafa; font-family: "Noto Sans", sans-serif; }
.dock { display: flex; flex-direction: column; padding-right: 2px; }
.dock-top { height: 323px; padding-bottom: 6px; border-bottom: 1px solid #777; }
.dock-bottom { flex: 1; padding-top: 3px; }
.dock-top .dock-grip { margin-top: 4px; }
.dock-grip { height: 7px; margin: 4px 3px 3px 4px; border: solid #999; border-width: 0 1px 1px 0; background: linear-gradient(#fff 1px, #f0f0f0 1px 2px, #999 2px 3px, #f0f0f0 3px 4px, #fff 4px 5px, #f0f0f0 5px); }
.tree { flex: 1; background: #fff; border: 1px solid #696969; border-right-color: #ddd; border-bottom-color: #ddd; }
.tree li { display: flex; align-items: center; height: 18px; }
.tree span { padding: 0 2px; margin-left: 3px; line-height: 18px; }
.tree .picked { font-weight: bold; }
.picked { background: #0078d7; color: #fff; }

/* Designer window */
.designer { display: flex; flex-direction: column; flex: 1; min-width: 0; margin: 0 3px 0 6px; border-left: 2px solid #8a8a8a; background: #fff; }
.bars { display: flex; gap: 4px; height: 30px; padding-right: 1px; }
.second { margin-top: 1px; }
.bar { display: flex; align-items: center; height: 30px; border: 1px solid #bdbdbd; border-left: 0; padding: 0 0 1px 1px; }
.bar.short { height: 27px; padding: 0; border-left: 1px solid #bdbdbd; flex: none; }
.grow { flex: 1; min-width: 0; }
.side-a { width: 277px; }
.side-b { width: 352px; }
.bar button { width: 25px; height: 25px; flex: none; padding: 0 1px 1px 0; }
.bar button.on { border: 1px solid #2b579a; }
.bar .drop { width: 37px; gap: 2px; --tip: #c3c3c3; }
.bar .ink { color: #666; --tip: #4178b5; }
.bar .off, .off { color: #bdbdbd; }
.bar .off b, .off em, .off u { font: bold 16px/20px "Liberation Sans", sans-serif; }
.bar .off em { font-style: italic; font-family: "Liberation Serif", serif; }
.bar .more { width: 8px; height: 20px; margin-left: auto; margin-right: 1px; padding: 0; }
.more svg { width: 8px; height: 16px; }
.grip { width: 3px; height: 20px; margin: 0 2px; flex: none; background: repeating-linear-gradient(#aaa 0 2px, transparent 2px 5px); }
.sep { width: 1px; height: 18px; margin: 0 1px; flex: none; background: #aaa; }
.sep.clear { background: none; }
.combo { display: grid; align-items: center; height: 22px; margin-left: 2px; color: #999; }
.combo select { grid-area: 1 / 1; width: 100%; height: 22px; padding: 0 3px; border: 1px solid #a8a8a8; border-radius: 0; appearance: none; background: #fff; color: #222; font: inherit; opacity: 1; }
.combo select:disabled { background: #efefef; }
.combo .chev { grid-area: 1 / 1; justify-self: end; margin-right: 3px; pointer-events: none; }
.zoom { width: 70px; margin-left: 3px; }
.font { width: 130px; }
.size { width: 50px; margin: 0 2px 0 5px; }

.work { display: flex; flex: 1; min-height: 0; padding-right: 1px; }
.palette { display: flex; flex-direction: column; align-items: center; align-self: flex-start; width: 28px; flex: none; padding: 0 0 3px 1px; border: 1px solid #bdbdbd; border-left: 0; }
.hgrip { width: 23px; height: 2px; margin: 3px 0 5px; background: repeating-linear-gradient(90deg, #aaa 0 2px, transparent 2px 5px); }
.palette button { flex-direction: column; justify-content: flex-start; gap: 4px; height: 33px; }
.palette .chev { transform: rotate(-90deg); }
.palette .one { justify-content: center; height: 23px; padding-bottom: 1px; }
.palette .last { height: 22px; }
.rule { width: 24px; height: 1px; background: #aaa; }

.center { display: flex; flex-direction: column; flex: 1; min-width: 0; margin-left: 1px; }
.tabs { display: flex; height: 27px; padding: 3px 0 0 4px; border-bottom: 1px solid #ddd; font: 11px/16px "Liberation Sans", sans-serif; }
.tab { gap: 6px; padding: 0 6px 1px; color: #000; }
.tab.active { gap: 7px; padding: 0 7px 0 4px; border: 1px solid #ccc; border-top: 2px solid #2b579a; border-bottom: 0; color: #2b579a; font-size: 12px; font-weight: bold; }
.sheet { display: grid; grid-template: 21px 1fr 18px / 21px 1fr 16px; flex: 1; min-height: 0; }
.sheet > svg { width: 100%; height: 100%; overflow: hidden; }
.hruler { grid-area: 1 / 1 / 2 / 4; }
.vruler { grid-area: 2 / 1 / 4 / 2; }
.canvas { grid-area: 2 / 2; background: #dce1ea; }
.tick { stroke: #555; }
.num { fill: #777; font: 9px "Liberation Sans", sans-serif; text-anchor: middle; }
.mark { fill: #00c; font: bold 10px "Liberation Sans", sans-serif; }
.item { fill: #000; font: 11px "Liberation Sans", sans-serif; }
.knob { fill: #777; }
.vbar, .hbar { display: flex; background: repeating-conic-gradient(#f1f1f1 0 25%, #fff 0 50%) 0 0 / 2px 2px; }
.vbar { grid-area: 2 / 3; flex-direction: column; }
.hbar { grid-area: 3 / 2; height: 16px; }
.vbar button, .hbar button, .thumb { width: 16px; height: 16px; background: #f0f0f0; border: 1px solid #f8f8f8; border-right: 2px solid #777; border-bottom: 2px solid #777; }
.vbar .thumb { height: 186px; }
.hbar .thumb { width: 298px; }
.vbar .end { margin-top: auto; }
.hbar .end { margin-left: auto; }

/* Dictionary */
.dict { display: flex; flex-direction: column; width: 345px; margin-left: 4px; flex: none; }
.dict-box { flex: 1; border: 1px solid #bdbdbd; border-bottom: 0; padding: 0 2px; }
.dict header { display: flex; justify-content: space-between; align-items: center; height: 22px; padding-left: 3px; }
.dict h2 { margin: 0; font: 11px/16px "Liberation Sans", sans-serif; }
.dict-bar { display: flex; align-items: center; height: 25px; border: 1px solid #bdbdbd; }
.dict-bar button { width: 24px; height: 23px; padding-bottom: 1px; }
.dict-bar .actions { width: auto; padding: 0 6px 1px 5px; gap: 6px; color: #000; }
.dict-bar .drop { width: 34px; gap: 2px; }
.dict-bar .kill { color: #d0563c; }
.fields { font: 11px/15px "Liberation Sans", sans-serif; }
.fields li { display: flex; align-items: center; height: 16px; }
.fields span { margin-left: 1px; padding: 0 2px; }
.fx { width: 16px; font: italic bold 15px/15px "Liberation Serif", serif; color: #555; }
.dict-tabs { display: flex; height: 23px; margin-bottom: 3px; font: 11px/16px "Liberation Sans", sans-serif; }
.dict-tabs button { gap: 6px; padding: 0 8px 1px 7px; color: #000; }
.dict-tabs .active { padding: 0 7px 0 4px; border: solid #ccc; border-width: 0 1px 2px; border-bottom-color: #2b579a; color: #2b579a; }
.dict-tabs .active + button { padding-left: 4px; }

.status { display: flex; align-items: center; height: 28px; flex: none; margin-bottom: 1px; background: #2b579a; color: #fff; }
.status button { color: #fff; }
.status .grip { margin-right: 9px; background: repeating-linear-gradient(#cfd8e8 0 2px, transparent 2px 5px); }
.status .sep { height: 16px; margin: 0; }
.units { width: 91px; }
.check { gap: 9px; padding: 0 9px; }
.pg { width: 44px; padding-left: 5px; }
.pos { display: flex; gap: 6px; padding-left: 5px; }
.arrows { position: absolute; left: 0; top: 0; pointer-events: none; }
```
